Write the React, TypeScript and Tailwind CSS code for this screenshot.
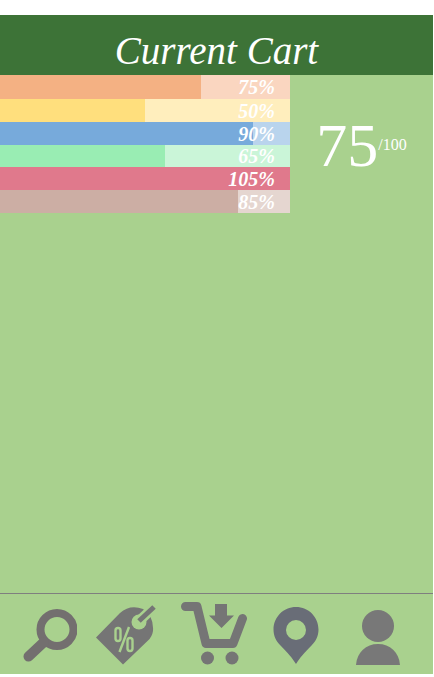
import type { ReactNode } from "react";

type Bar = { label: string; value: number; fill: string; track: string; width: string; height: string };

const bars: Bar[] = [
  { label: "Meter 1", value: 75, fill: "bg-[#f4b183]", track: "bg-[#fad6c0]", width: "w-[201px]", height: "h-6" },
  { label: "Meter 2", value: 50, fill: "bg-[#ffdf7d]", track: "bg-[#ffeebd]", width: "w-[145px]", height: "h-[23px]" },
  { label: "Meter 3", value: 90, fill: "bg-[#77aadb]", track: "bg-[#b9d4ed]", width: "w-[253px]", height: "h-[23px]" },
  { label: "Meter 4", value: 65, fill: "bg-[#99edb3]", track: "bg-[#caf5d8]", width: "w-[165px]", height: "h-[22px]" },
  { label: "Meter 5", value: 105, fill: "bg-[#e0798c]", track: "bg-[#e0798c]", width: "w-full", height: "h-[23px]" },
  { label: "Meter 6", value: 85, fill: "bg-[#ccaea4]", track: "bg-[#e5d6d0]", width: "w-[238px]", height: "h-[23px]" },
];

function Meter({ bar }: { bar: Bar }) {
  return (
    <li className={`relative flex items-center justify-end pr-[15px] ${bar.track} ${bar.height}`}>
      <div className={`absolute inset-y-0 left-0 ${bar.fill} ${bar.width}`} />
      <span className="relative text-xl leading-6 font-bold italic">{bar.value}%</span>
    </li>
  );
}

function NavButton({ label, children }: { label: string; children: ReactNode }) {
  return (
    <button type="button" aria-label={label} className="flex flex-1 items-end justify-center">
      {children}
    </button>
  );
}

function SearchIcon() {
  return (
    <svg width="54" height="56" viewBox="0 0 54 56" fill="none" stroke="#736f6f">
      <circle cx="34" cy="20.5" r="16.500" strokeWidth="8" />
      <path d="M21 33 L5.500 47.500" strokeWidth="10" strokeLinecap="round" />
    </svg>
  );
}

function TagIcon() {
  return (
    <svg width="72" height="60" viewBox="0 0 72 60" fill="none">
      <path d="M0 32.500 L24 8 Q34 -1 47 4 Q58 11 57 26 Q56 32 52 35.500 L27 59.500 Z" fill="#757575" />
      <circle cx="43" cy="17" r="7.500" fill="#a9d18e" />
      <path d="M41 18 L59 1" stroke="#a9d18e" strokeWidth="10" />
      <path d="M43 16 L58 2" stroke="#757575" strokeWidth="5" />
      <g stroke="#a9d18e" strokeWidth="2.400">
        <rect x="19.500" y="23" width="5" height="13" rx="2.500" />
        <rect x="31.500" y="33" width="5" height="13" rx="2.500" />
        <path d="M33 22 L23.500 47" />
      </g>
    </svg>
  );
}

function CartIcon() {
  return (
    <svg width="66" height="64" viewBox="0 0 66 64" fill="#757575">
      <path
        d="M4.500 5.500 H16 L25 42.500 H52 L61.500 17.500"
        fill="none"
        stroke="#757575"
        strokeWidth="9"
        strokeLinecap="round"
        strokeLinejoin="round"
      />
      <path d="M34 3 H46 V14.500 H53 L40.500 27 L28 14.500 H34 Z" />
      <circle cx="26.500" cy="57" r="6.500" />
      <circle cx="51" cy="57" r="6.500" />
    </svg>
  );
}

function PinIcon() {
  return (
    <svg width="46" height="58" viewBox="0 0 46 58" fill="#696d77">
      <path
        fillRule="evenodd"
        d="M23 0 C35.500 0 45.500 10 45.500 22.500 C45.500 29 43 34 38.500 38.500 C31 46 27 50.500 23 57 C19 50.500 15 46 7.500 38.500 C3 34 0.500 29 0.500 22.500 C0.500 10 10.500 0 23 0 Z M23 13 A10 10 0 1 0 23 33 A10 10 0 1 0 23 13 Z"
      />
    </svg>
  );
}

function PersonIcon() {
  return (
    <svg width="46" height="55" viewBox="0 0 46 55" fill="#787878">
      <circle cx="23" cy="16" r="16" />
      <path d="M1 55 C2 42 11 34 23 34 C35 34 44 42 45 55 Z" />
    </svg>
  );
}

export default function App() {
  return (
    <div className="flex min-h-screen flex-col bg-white pt-[15px] pr-px pb-[3px] font-['Liberation_Serif',serif] text-white">
      <header className="bg-[#3d7337] pt-3 text-center">
        <h1 className="text-[39px] leading-[48px] italic">Current Cart</h1>
      </header>
      <main className="flex flex-1 items-start bg-[#a9d18e]">
        <ul className="w-[290px] shrink-0">
          {bars.map((bar) => (
            <Meter key={bar.label} bar={bar} />
          ))}
        </ul>
        <p className="flex flex-1 items-center justify-center pt-[34px]">
          <span className="text-[62px] leading-[72px]">75</span>
          <span className="text-base">/100</span>
        </p>
      </main>
      <nav className="flex h-[81px] items-end border-t border-[#7f7f7f] bg-[#a9d18e] pr-[14px] pb-[9px] pl-[9px]">
        <NavButton label="Search"><SearchIcon /></NavButton>
        <NavButton label="Deals"><TagIcon /></NavButton>
        <NavButton label="Cart"><CartIcon /></NavButton>
        <NavButton label="Stores"><PinIcon /></NavButton>
        <NavButton label="Profile"><PersonIcon /></NavButton>
      </nav>
    </div>
  );
}
